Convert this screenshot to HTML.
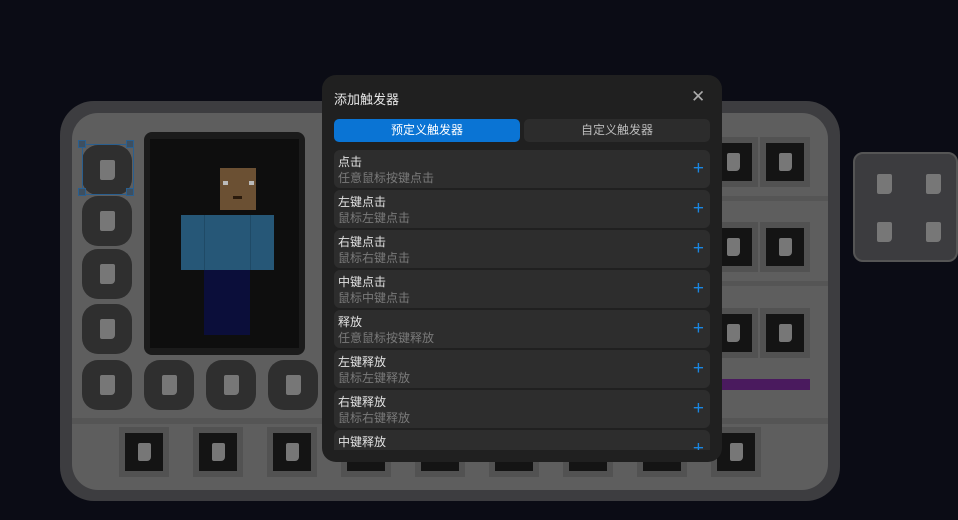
<!DOCTYPE html>
<html><head><meta charset="utf-8"><style>
*{margin:0;padding:0;box-sizing:border-box}
body{width:958px;height:520px;overflow:hidden;background:#0b0c15;position:relative;font-family:"Liberation Sans","Noto Sans CJK SC",sans-serif}
.a{position:absolute}
.outer{left:60px;top:101px;width:780px;height:400px;background:#3d3d40;border-radius:34px}
.inner{left:72px;top:113px;width:756px;height:377px;background:#5e5e5e;border-radius:26px}
.circ{position:absolute;width:50px;height:50px;background:#2f2f2f;border-radius:16px}
.circ:after,.sl i,.cube i{content:"";position:absolute;left:18px;top:15px;width:15px;height:20px;background:#777;border-radius:2px 2px 4px 2px}
.sl{position:absolute;width:50px;height:50px;background:#525252}
.sl:before{content:"";position:absolute;left:6px;top:6px;width:38px;height:38px;background:#141414}
.sl i{left:19px;top:16px;width:13px;height:18px;z-index:1}
.hl{position:absolute;height:5px;background:#555}
.modal{left:322px;top:75px;width:400px;height:387px;background:#202020;border-radius:14px;overflow:hidden;z-index:10}
.item{position:absolute;left:12px;width:376px;height:38px;background:#2d2d2d;border-radius:6px}
.item b{position:absolute;left:4px;top:3px;font-weight:normal;font-size:12px;color:#e2e2e2}
.item s{position:absolute;left:4px;top:19px;text-decoration:none;font-size:12px;color:#7a7a7a}
.item u{position:absolute;right:6px;top:9px;text-decoration:none;font-size:19px;color:#1a86e0;line-height:19px}
.h{position:absolute;width:8px;height:8px;border:1.5px solid #2a5f8f;background:#3d4f60}
</style></head><body>
<div class="a outer"></div>
<div class="a inner"></div>
<div class="hl" style="left:72px;top:418px;width:756px;height:6px"></div>
<div class="hl" style="left:710px;top:196px;width:118px"></div>
<div class="hl" style="left:710px;top:281px;width:118px"></div>
<div class="a" style="left:144px;top:132px;width:161px;height:223px;background:#1b1b1b;border-radius:8px"></div>
<div class="a" style="left:150px;top:139px;width:149px;height:209px;background:#0e0e0e"></div>
<div class="a" style="left:220px;top:168px;width:36px;height:42px;background:#6b5033"></div>
<div class="a" style="left:223px;top:181px;width:5px;height:4px;background:#bbb"></div>
<div class="a" style="left:249px;top:181px;width:5px;height:4px;background:#bbb"></div>
<div class="a" style="left:233px;top:196px;width:9px;height:3px;background:#2a1a0c"></div>
<div class="a" style="left:181px;top:215px;width:93px;height:55px;background:#265777"></div>
<div class="a" style="left:204px;top:215px;width:1px;height:55px;background:#1f4a66"></div>
<div class="a" style="left:250px;top:215px;width:1px;height:55px;background:#1f4a66"></div>
<div class="a" style="left:204px;top:270px;width:46px;height:65px;background:#0b0e3a"></div>
<div class="circ" style="left:82px;top:145px"></div>
<div class="circ" style="left:82px;top:196px"></div>
<div class="circ" style="left:82px;top:249px"></div>
<div class="circ" style="left:82px;top:304px"></div>
<div class="circ" style="left:82px;top:360px"></div>
<div class="circ" style="left:144px;top:360px"></div>
<div class="circ" style="left:206px;top:360px"></div>
<div class="circ" style="left:268px;top:360px"></div>
<div class="a" style="left:82px;top:144px;width:52px;height:51px;border:1.5px solid #2a5f8f"></div>
<div class="h" style="left:78px;top:140px"></div><div class="h" style="left:126px;top:140px"></div>
<div class="h" style="left:78px;top:188px"></div><div class="h" style="left:126px;top:188px"></div>
<div class="sl" style="left:119px;top:427px"><i></i></div>
<div class="sl" style="left:193px;top:427px"><i></i></div>
<div class="sl" style="left:267px;top:427px"><i></i></div>
<div class="sl" style="left:341px;top:427px"><i></i></div>
<div class="sl" style="left:415px;top:427px"><i></i></div>
<div class="sl" style="left:489px;top:427px"><i></i></div>
<div class="sl" style="left:563px;top:427px"><i></i></div>
<div class="sl" style="left:637px;top:427px"><i></i></div>
<div class="sl" style="left:711px;top:427px"><i></i></div>
<div class="sl" style="left:708px;top:137px"><i></i></div>
<div class="sl" style="left:760px;top:137px"><i></i></div>
<div class="sl" style="left:708px;top:222px"><i></i></div>
<div class="sl" style="left:760px;top:222px"><i></i></div>
<div class="sl" style="left:708px;top:308px"><i></i></div>
<div class="sl" style="left:760px;top:308px"><i></i></div>
<div class="a" style="left:710px;top:379px;width:100px;height:11px;background:#4a1a5e"></div>
<div class="a cube" style="left:853px;top:152px;width:105px;height:110px;background:#3c3c3f;border:2px solid #555;border-radius:10px">
<i style="left:22px;top:20px"></i><i style="left:71px;top:20px"></i><i style="left:22px;top:68px"></i><i style="left:71px;top:68px"></i></div>
<div class="a modal">
<div class="a" style="left:12px;top:14px;font-size:13px;color:#e6e6e6">添加触发器</div>
<div class="a" style="left:369px;top:12px;font-size:17px;color:#aaa">✕</div>
<div class="a" style="left:12px;top:44px;width:186px;height:23px;background:#0a74d4;border-radius:5px;color:#fff;font-size:12px;text-align:center;line-height:23px">预定义触发器</div>
<div class="a" style="left:202px;top:44px;width:186px;height:23px;background:#2c2c2c;border-radius:5px;color:#bbb;font-size:12px;text-align:center;line-height:23px">自定义触发器</div>
<div class="a" style="left:0;top:75px;width:400px;height:300px;overflow:hidden">
<div class="item" style="top:0"><b>点击</b><s>任意鼠标按键点击</s><u>+</u></div>
<div class="item" style="top:40px"><b>左键点击</b><s>鼠标左键点击</s><u>+</u></div>
<div class="item" style="top:80px"><b>右键点击</b><s>鼠标右键点击</s><u>+</u></div>
<div class="item" style="top:120px"><b>中键点击</b><s>鼠标中键点击</s><u>+</u></div>
<div class="item" style="top:160px"><b>释放</b><s>任意鼠标按键释放</s><u>+</u></div>
<div class="item" style="top:200px"><b>左键释放</b><s>鼠标左键释放</s><u>+</u></div>
<div class="item" style="top:240px"><b>右键释放</b><s>鼠标右键释放</s><u>+</u></div>
<div class="item" style="top:280px"><b>中键释放</b><s>鼠标中键释放</s><u>+</u></div>
</div>
</div>
</body></html>
